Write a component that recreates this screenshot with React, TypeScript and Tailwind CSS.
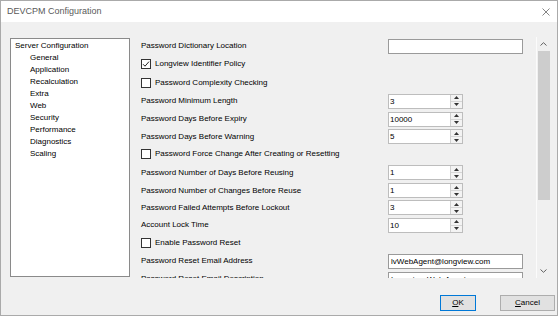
import React from "react";

type Row = {
  label: string;
  kind: "text" | "check" | "spin";
  value?: string;
  checked?: boolean;
  h: string;
};

const rows: Row[] = [
  { label: "Password Dictionary Location", kind: "text", value: "", h: "h-[18px]" },
  { label: "Longview Identifier Policy", kind: "check", checked: true, h: "h-[18px]" },
  { label: "Password Complexity Checking", kind: "check", h: "h-[19px]" },
  { label: "Password Minimum Length", kind: "spin", value: "3", h: "h-[18px]" },
  { label: "Password Days Before Expiry", kind: "spin", value: "10000", h: "h-[18px]" },
  { label: "Password Days Before Warning", kind: "spin", value: "5", h: "h-[17px]" },
  { label: "Password Force Change After Creating or Resetting", kind: "check", h: "h-[18px]" },
  { label: "Password Number of Days Before Reusing", kind: "spin", value: "1", h: "h-[19px]" },
  { label: "Password Number of Changes Before Reuse", kind: "spin", value: "1", h: "h-[17px]" },
  { label: "Password Failed Attempts Before Lockout", kind: "spin", value: "3", h: "h-[17px]" },
  { label: "Account Lock Time", kind: "spin", value: "10", h: "h-[18px]" },
  { label: "Enable Password Reset", kind: "check", h: "h-[18px]" },
  { label: "Password Reset Email Address", kind: "text", value: "lvWebAgent@longview.com", h: "h-[18px]" },
  { label: "Password Reset Email Description", kind: "text", value: "Longview Web Agent", h: "h-[18px]" },
];

const tree = [
  "General",
  "Application",
  "Recalculation",
  "Extra",
  "Web",
  "Security",
  "Performance",
  "Diagnostics",
  "Scaling",
];

function CheckBox({ checked }: { checked?: boolean }) {
  return (
    <div className="w-[10px] h-[10px] border border-[#333] bg-white flex items-center justify-center">
      {checked && (
        <svg width="8" height="8" viewBox="0 0 8 8">
          <path d="M1 4.2 L3 6.2 L7 1.6" stroke="#222" strokeWidth="1" fill="none" />
        </svg>
      )}
    </div>
  );
}

function Spin({ value }: { value: string }) {
  return (
    <div className="w-[75px] h-[15px] border border-[#bdbdbd] bg-white flex">
      <div className="flex-1 pl-[1px] leading-[13px]">{value}</div>
      <div className="w-[12px] border-l border-[#d0d0d0] bg-[#f3f3f3] flex flex-col">
        <div className="flex-1 flex items-center justify-center border-b border-[#d6d6d6]">
          <svg width="5" height="3" viewBox="0 0 5 3">
            <path d="M0 3 L2.5 0 L5 3 Z" fill="#333" />
          </svg>
        </div>
        <div className="flex-1 flex items-center justify-center">
          <svg width="5" height="3" viewBox="0 0 5 3">
            <path d="M0 0 L2.5 3 L5 0 Z" fill="#333" />
          </svg>
        </div>
      </div>
    </div>
  );
}

export default function App() {
  return (
    <div
      className="w-[558px] h-[316px] border border-[#aaaaaa] flex flex-col bg-[#f0f0f0] text-black text-[8px] overflow-hidden"
      style={{ fontFamily: '"Liberation Sans", Arial, sans-serif' }}
    >
      <div className="h-[21px] bg-white flex items-center justify-between pl-[6px] pr-[7px]">
        <span className="text-[9px] text-[#5a5a5a]">DEVCPM Configuration</span>
        <svg width="8" height="8" viewBox="0 0 8 8">
          <path d="M0.5 0.5 L7.5 7.5 M7.5 0.5 L0.5 7.5" stroke="#777" strokeWidth="0.9" />
        </svg>
      </div>

      <div className="flex mt-[15px] h-[241px]">
        <div className="ml-[9px] mt-[1px] w-[120px] h-[239px] border border-[#8a8a8a] bg-white pt-[1px]">
          <div className="pl-[4px] h-[12px] leading-[12px]">Server Configuration</div>
          {tree.map((t) => (
            <div key={t} className="pl-[19px] h-[12px] leading-[12px]">
              {t}
            </div>
          ))}
        </div>

        <div className="ml-[5px] w-[401px] h-[241px] overflow-hidden">
          {rows.map((r) => (
            <div key={r.label} className={`${r.h} flex items-center pl-[6px]`}>
              {r.kind === "check" ? (
                <div className="flex items-center gap-[4px]">
                  <CheckBox checked={r.checked} />
                  <span>{r.label}</span>
                </div>
              ) : (
                <>
                  <div className="w-[247px]">{r.label}</div>
                  {r.kind === "spin" ? (
                    <Spin value={r.value ?? ""} />
                  ) : (
                    <div className="w-[135px] h-[15px] border border-[#9a9a9a] bg-white pl-[2px] leading-[13px] whitespace-nowrap overflow-hidden">
                      {r.value}
                    </div>
                  )}
                </>
              )}
            </div>
          ))}
        </div>

        <div className="w-[14px] h-[241px] border-l border-[#fbfbfb] flex flex-col">
          <div className="h-[14px] flex items-center justify-center">
            <svg width="7" height="4" viewBox="0 0 7 4">
              <path d="M0.5 3.5 L3.5 0.7 L6.5 3.5" stroke="#606060" strokeWidth="1" fill="none" />
            </svg>
          </div>
          <div className="h-[149px] mx-[0.5px] bg-[#cdcdcd]" />
          <div className="flex-1" />
          <div className="h-[14px] flex items-center justify-center">
            <svg width="7" height="4" viewBox="0 0 7 4">
              <path d="M0.5 0.5 L3.5 3.3 L6.5 0.5" stroke="#606060" strokeWidth="1" fill="none" />
            </svg>
          </div>
        </div>
      </div>

      <div className="flex justify-end gap-[24px] mt-[17px] mr-[2px]">
        <button className="w-[36px] h-[16px] border border-[#0078d7] bg-[#e1e1e1] text-[8px] leading-[14px]">
          <span className="underline">O</span>K
        </button>
        <button className="w-[55px] h-[16px] border border-[#adadad] bg-[#e1e1e1] text-[8px] leading-[14px]">
          <span className="underline">C</span>ancel
        </button>
      </div>
    </div>
  );
}
